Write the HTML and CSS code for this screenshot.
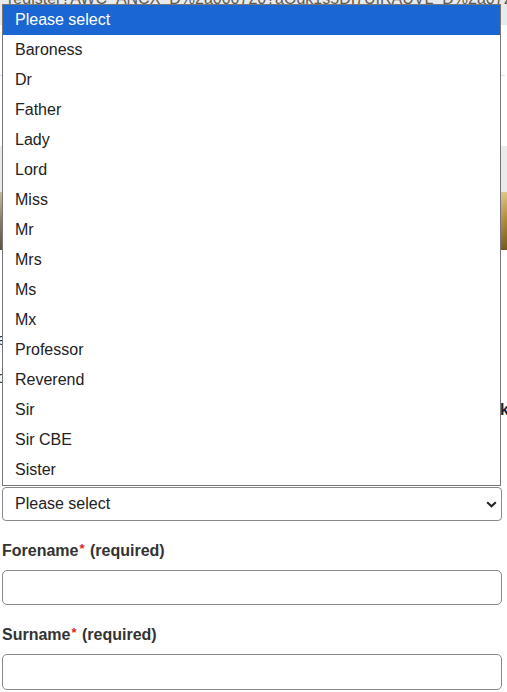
FILE: index.html
```html
<!DOCTYPE html>
<html lang="en">
<head>
<meta charset="utf-8">
<title>Register</title>
<link rel="stylesheet" href="styles.css">
</head>
<body>
<div class="topbar"><div class="url">register?AWC_ANCX_D%2a000720?aOgk1s5DI7UIRAUVL_D%2a0720</div></div>
<div class="page">
  <div class="rule"></div>
  <div class="banner"></div>
  <div class="hero"></div>
  <div class="content">
    <p class="line l1">een a member of the society before</p>
    <p class="line l2">ou can register for an account below</p>
    <p class="line l3 bold">tle and name details to book</p>
  </div>
  <form class="form">
    <div class="select"><span>Please select</span>
      <svg class="chev" width="11" height="7" viewBox="0 0 11 7"><polyline points="1.2,1.2 5.5,5.3 9.8,1.2" fill="none" stroke="#222" stroke-width="2"/></svg>
    </div>
    <label class="label first">Forename<span class="req">*</span> (required)</label>
    <div class="input"></div>
    <label class="label second">Surname<span class="req">*</span> (required)</label>
    <div class="input last"></div>
  </form>
</div>
<ul class="dropdown">
  <li class="opt selected">Please select</li>
  <li class="opt">Baroness</li>
  <li class="opt">Dr</li>
  <li class="opt">Father</li>
  <li class="opt">Lady</li>
  <li class="opt">Lord</li>
  <li class="opt">Miss</li>
  <li class="opt">Mr</li>
  <li class="opt">Mrs</li>
  <li class="opt">Ms</li>
  <li class="opt">Mx</li>
  <li class="opt">Professor</li>
  <li class="opt">Reverend</li>
  <li class="opt">Sir</li>
  <li class="opt">Sir CBE</li>
  <li class="opt">Sister</li>
</ul>
</body>
</html>
```
FILE: styles.css
```css
html, body {
  margin: 0;
  padding: 0;
  background: #fff;
  font-family: "Liberation Sans", Arial, sans-serif;
  overflow: hidden;
}
.topbar {
  height: 25px;
  background: #e9eaec;
  overflow: hidden;
}
.url {
  margin-top: -10px;
  padding-left: 8px;
  font-size: 16px;
  line-height: 18px;
  color: #5f5a50;
  white-space: nowrap;
}
.page {
  width: 500px;
  padding-left: 2px;
}
.rule {
  margin-top: 50px;
  height: 1px;
  background: #dedede;
  width: 505px;
  margin-left: -2px;
}
.banner {
  margin-top: 70px;
  height: 46px;
  background: #ebebeb;
  width: 507px;
  margin-left: -2px;
}
.hero {
  height: 58px;
  width: 507px;
  margin-left: -2px;
  background:
    linear-gradient(180deg, rgba(255,240,200,0.55) 0%, rgba(255,240,200,0) 45%, rgba(40,25,0,0.45) 100%),
    linear-gradient(90deg, #8b826c 0%, #6f6548 40%, #a4875a 85%, #d4ad62 96%, #b08a40 100%);
}
.content {
  height: 237px;
  margin-left: -2px;
  width: 507px;
  overflow: hidden;
  display: flex;
  flex-direction: column;
}
.line {
  margin: 0;
  font-size: 16px;
  line-height: 20px;
  color: #333;
  white-space: nowrap;
  margin-left: -3px;
}
.l1 { margin-top: 80px; }
.l2 { margin-top: 18px; }
.l3 { margin-top: 12px; text-align: right; margin-right: -2px; margin-left: 0; }
.bold { font-weight: bold; color: #222; }
.form {
  display: flex;
  flex-direction: column;
  margin: 0;
}
.select {
  box-sizing: border-box;
  height: 34px;
  border: 1px solid #8a8a8a;
  border-radius: 4px;
  display: flex;
  align-items: center;
  justify-content: space-between;
  padding: 0 4px 0 12px;
  font-size: 16px;
  color: #222;
}
.chev { display: block; margin-top: 1px; }
.label {
  display: block;
  font-size: 16px;
  line-height: 20px;
  font-weight: bold;
  color: #333;
}
.label.first { margin-top: 18px; }
.label.second { margin-top: 18px; }
.req {
  color: #e0261b;
  font-weight: bold;
  font-size: 13px;
  vertical-align: 3px;
  margin-left: 1px;
  margin-right: 1px;
}
.input {
  box-sizing: border-box;
  margin-top: 9px;
  height: 35px;
  border: 1px solid #8a8a8a;
  border-radius: 5px;
}
.input.last { height: 36px; }
.dropdown {
  position: absolute;
  top: 4px;
  left: 2px;
  width: 499px;
  box-sizing: border-box;
  margin: 0;
  padding: 0;
  list-style: none;
  background: #fff;
  border: 1px solid #767676;
}
.opt {
  height: 30px;
  line-height: 30px;
  padding-left: 12px;
  font-size: 16px;
  color: #222;
  white-space: nowrap;
}
.opt.selected {
  background: #1a67d3;
  color: #fff;
}
```
